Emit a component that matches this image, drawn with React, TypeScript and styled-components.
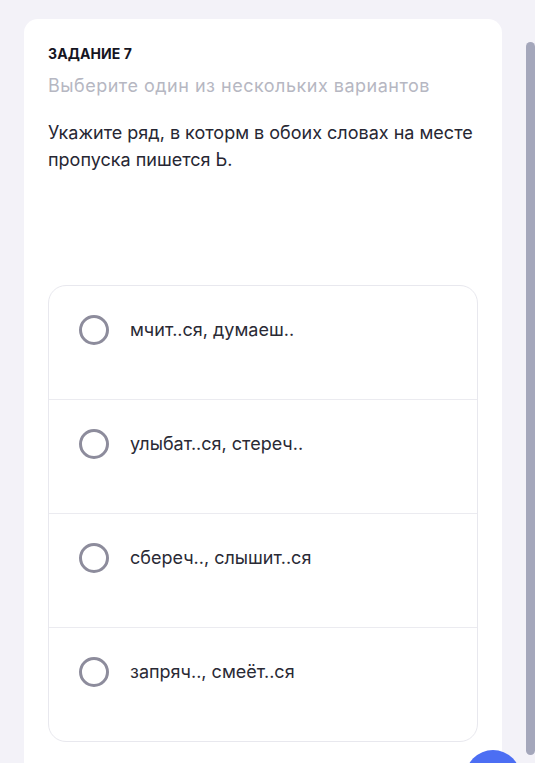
import React from "react";
import styled, { createGlobalStyle } from "styled-components";

const Global = createGlobalStyle`
  html, body {
    margin: 0;
    padding: 0;
    background: #f3f2f8;
    font-family: Inter, "Noto Sans", "Liberation Sans", sans-serif;
    overflow: hidden;
  }
  * { box-sizing: border-box; }
`;

const Page = styled.div`
  padding: 19px 33px 0 24px;
  height: 763px;
  overflow: hidden;
`;

const Card = styled.div`
  background: #ffffff;
  border-radius: 14px;
  padding: 26px 24px 40px 24px;
`;

const Label = styled.div`
  font-size: 14px;
  font-weight: 700;
  color: #15151f;
  letter-spacing: 0.1px;
  line-height: 18px;
`;

const Hint = styled.div`
  margin-top: 11px;
  font-size: 18px;
  letter-spacing: 0.5px;
  color: #b6b7c2;
  line-height: 24px;
`;

const Question = styled.p`
  margin: 21px 0 0 0;
  font-size: 18px;
  line-height: 27px;
  color: #272733;
  min-height: 166px;
`;

const Options = styled.div`
  border: 1px solid #e8e8ee;
  border-radius: 18px;
  display: flex;
  flex-direction: column;
  overflow: hidden;
`;

const Option = styled.label<{ $first?: boolean }>`
  display: flex;
  align-items: center;
  gap: 21px;
  min-height: 113px;
  padding: 29px 30px 54px 30px;
  border-top: ${(p) => (p.$first ? "none" : "1px solid #ebebf0")};
  cursor: pointer;
`;

const Radio = styled.span`
  width: 30px;
  height: 30px;
  flex: 0 0 30px;
  border-radius: 50%;
  border: 3px solid #8d8c9c;
`;

const OptionText = styled.span`
  font-size: 18px;
  color: #2a2a35;
  line-height: 24px;
`;

const ScrollThumb = styled.div`
  position: fixed;
  right: 0;
  top: 42px;
  width: 9px;
  height: 713px;
  border-radius: 5px;
  background: #a4a7bb;
`;

const Fab = styled.div`
  position: fixed;
  left: 465px;
  top: 750px;
  width: 56px;
  height: 56px;
  border-radius: 50%;
  background: #4c6ef3;
`;

const options = [
  "мчит..ся, думаеш..",
  "улыбат..ся, стереч..",
  "сбереч.., слышит..ся",
  "запряч.., смеёт..ся",
];

export default function App() {
  return (
    <>
      <Global />
      <Page>
        <Card>
          <Label>ЗАДАНИЕ 7</Label>
          <Hint>Выберите один из нескольких вариантов</Hint>
          <Question>
            Укажите ряд, в которм в обоих словах на месте пропуска пишется Ь.
          </Question>
          <Options>
            {options.map((o, i) => (
              <Option key={o} $first={i === 0}>
                <Radio />
                <OptionText>{o}</OptionText>
              </Option>
            ))}
          </Options>
        </Card>
      </Page>
      <ScrollThumb />
      <Fab />
    </>
  );
}
